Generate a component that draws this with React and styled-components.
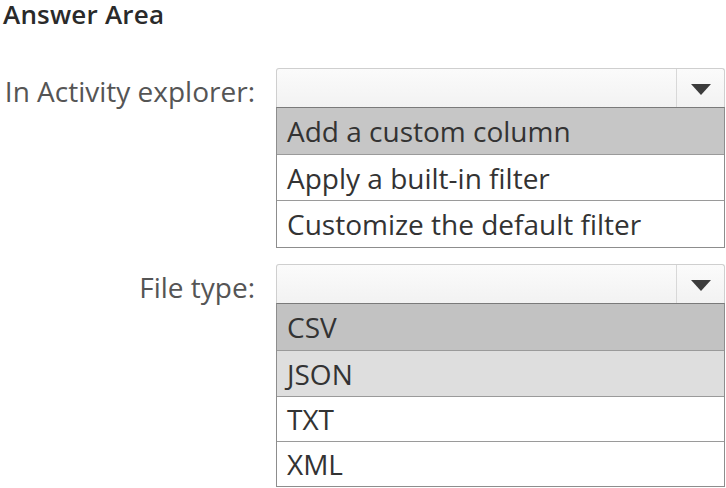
import React from "react";
import styled, { createGlobalStyle } from "styled-components";

const Global = createGlobalStyle`
  html, body { margin: 0; padding: 0; background: #ffffff; }
  body { font-family: "Open Sans", "Noto Sans", sans-serif; color: #333; }
`;

const Page = styled.div`
  width: 726px;
  height: 488px;
  overflow: hidden;
  display: flex;
  flex-direction: column;
`;

const Title = styled.div`
  font-size: 26px;
  font-weight: 600;
  color: #2a2a2a;
  padding-left: 3px;
  height: 68px;
  line-height: 28px;
  letter-spacing: 0.2px;
`;

const Row = styled.div`
  display: grid;
  grid-template-columns: 276px 449px;
  align-items: start;
  margin-bottom: ${(p) => p.$gap || 0}px;
`;

const Label = styled.div`
  font-size: 28px;
  color: #555;
  text-align: right;
  padding-right: 21px;
  height: 40px;
  line-height: 46px;
  white-space: nowrap;
`;

const Combo = styled.div`
  display: flex;
  flex-direction: column;
`;

const SelectBox = styled.div`
  height: 38px;
  display: flex;
  border: 1px solid #cfcfcf;
  border-bottom: none;
  border-radius: 3px 3px 0 0;
  background: linear-gradient(#fbfbfb, #f2f2f2);
`;

const SelectField = styled.div`
  flex: 1;
`;

const ArrowCell = styled.div`
  width: 47px;
  border-left: 1px solid #d8d8d8;
  display: flex;
  align-items: center;
  justify-content: center;
  padding-top: 2px;
`;

const List = styled.div`
  border: 1px solid #8d8d8d;
  border-top: 1px solid #7a7a7a;
  display: flex;
  flex-direction: column;
`;

const Item = styled.div`
  height: ${(p) => p.$h || 46}px;
  box-sizing: border-box;
  padding-left: 10px;
  font-size: 28px;
  line-height: ${(p) => p.$h || 46}px;
  color: #333;
  background: ${(p) => p.$bg || "#ffffff"};
  & + & {
    border-top: 1px solid #9a9a9a;
  }
`;

const Arrow = () => (
  <svg width="20" height="11" viewBox="0 0 20 11">
    <path d="M0 0 H20 L10 11 Z" fill="#3c3c3c" />
  </svg>
);

export default function App() {
  return (
    <Page>
      <Global />
      <Title>Answer Area</Title>
      <Row $gap={16}>
        <Label>In Activity explorer:</Label>
        <Combo>
          <SelectBox>
            <SelectField />
            <ArrowCell><Arrow /></ArrowCell>
          </SelectBox>
          <List>
            <Item $bg="#c6c6c6">Add a custom column</Item>
            <Item>Apply a built-in filter</Item>
            <Item $h={47}>Customize the default filter</Item>
          </List>
        </Combo>
      </Row>
      <Row>
        <Label>File type:</Label>
        <Combo>
          <SelectBox>
            <SelectField />
            <ArrowCell><Arrow /></ArrowCell>
          </SelectBox>
          <List>
            <Item $bg="#c2c2c2">CSV</Item>
            <Item $bg="#dedede">JSON</Item>
            <Item $h={45}>TXT</Item>
            <Item $h={45}>XML</Item>
          </List>
        </Combo>
      </Row>
    </Page>
  );
}
